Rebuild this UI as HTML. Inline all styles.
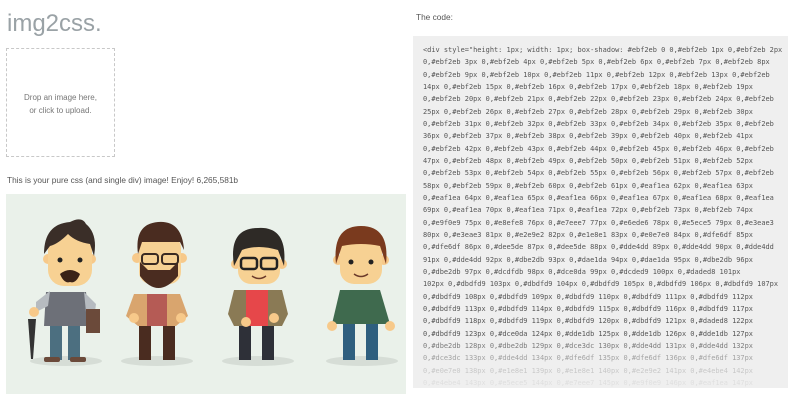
<!DOCTYPE html>
<html><head><meta charset="utf-8"><style>
html,body{margin:0;padding:0;background:#fff;width:800px;height:400px;overflow:hidden;font-family:"Liberation Sans",sans-serif;}
.t{position:absolute;left:7px;top:10px;font-size:24px;font-weight:300;color:#9aa2a6;letter-spacing:0px;}
.drop{position:absolute;left:6px;top:48px;width:107px;height:107px;border:1px dashed #c8c8c8;color:#777;font-size:8px;text-align:center;line-height:13px;}
.drop div{margin-top:42px}
.en{position:absolute;left:7px;top:175px;font-size:8.3px;color:#555;}
.img{position:absolute;left:6px;top:194px;width:400px;height:200px;background:#eaf1ea}
.code-l{position:absolute;left:416px;top:12px;font-size:8.3px;color:#555}
.box{position:absolute;left:413px;top:36px;width:375px;height:352px;background:#efefef;}
pre{margin:0;position:absolute;left:10px;top:8px;font-family:"DejaVu Sans Mono","Liberation Mono",monospace;font-size:6.95px;line-height:12.33px;color:#555;}
.f1{opacity:.75}.f2{opacity:.5}.f3{opacity:.25}
</style></head><body>
<div class="t">img2css.</div>
<div class="drop"><div>Drop an image here,<br>or click to upload.</div></div>
<div class="en">This is your pure css (and single div) image! Enjoy! 6,265,581b</div>
<div class="img">
<svg width="400" height="200" viewBox="0 0 400 200">
<g fill="#d6ddd6"><ellipse cx="60" cy="167" rx="36" ry="5"/><ellipse cx="151" cy="167" rx="36" ry="5"/><ellipse cx="252" cy="167" rx="36" ry="5"/><ellipse cx="356" cy="167" rx="36" ry="5"/></g>
<g>
<rect x="44" y="128" width="12" height="38" fill="#4c6f80"/><rect x="62" y="128" width="12" height="38" fill="#4c6f80"/>
<rect x="38" y="163" width="16" height="5" rx="2" fill="#6b4a3a"/><rect x="64" y="163" width="16" height="5" rx="2" fill="#6b4a3a"/>
<path d="M40 98 L80 98 L84 132 L38 132Z" fill="#6d7078"/>
<path d="M30 108 L44 97 L42 112 L30 118Z" fill="#b6bbc0"/><path d="M78 98 L90 110 L88 125 L80 118Z" fill="#b6bbc0"/>
<rect x="80" y="115" width="14" height="24" fill="#6b4a3a"/>
<circle cx="28" cy="118" r="5" fill="#f7c98a"/>
<path d="M22 125 L30 125 L27 165 L25 165Z" fill="#333"/>
<circle cx="42" cy="65" r="5" fill="#f7c98a"/><circle cx="85" cy="65" r="5" fill="#f7c98a"/>
<rect x="42" y="40" width="44" height="52" rx="16" fill="#f7d193"/>
<path d="M38 60 Q38 30 64 28 Q76 22 80 30 Q92 40 88 62 L84 50 Q70 48 62 40 Q52 50 44 52Z" fill="#3a2e28"/>
<circle cx="54" cy="66" r="2.5" fill="#222"/><circle cx="74" cy="66" r="2.5" fill="#222"/>
<path d="M54 80 Q64 72 74 80 Q70 90 64 88 Q58 90 54 80Z" fill="#3a2218"/>
</g>
<g>
<rect x="133" y="128" width="12" height="38" fill="#4a2c20"/><rect x="157" y="128" width="12" height="38" fill="#4a2c20"/>
<path d="M128 100 L174 100 L182 122 L170 132 L132 132 L120 122Z" fill="#d9a56e"/>
<rect x="141" y="100" width="20" height="32" fill="#b55b55"/>
<circle cx="128" cy="124" r="5" fill="#f7c98a"/><circle cx="175" cy="124" r="5" fill="#f7c98a"/>
<circle cx="131" cy="64" r="5" fill="#f7c98a"/><circle cx="176" cy="64" r="5" fill="#f7c98a"/>
<rect x="133" y="42" width="42" height="48" rx="12" fill="#f7d193"/>
<path d="M132 60 Q128 30 152 28 Q176 26 178 56 L174 48 L136 48Z" fill="#4a2c20"/>
<path d="M134 68 L134 82 Q152 106 172 82 L172 68 L164 76 L142 76Z" fill="#4a2c20"/>
<rect x="136" y="60" width="16" height="10" rx="3" fill="none" stroke="#3a2a22" stroke-width="2"/><rect x="156" y="60" width="16" height="10" rx="3" fill="none" stroke="#3a2a22" stroke-width="2"/>
</g>
<g>
<rect x="233" y="128" width="12" height="38" fill="#2e3038"/><rect x="256" y="128" width="12" height="38" fill="#2e3038"/>
<path d="M228 96 L276 96 L282 120 L276 132 L228 132 L222 120Z" fill="#8a7a55"/>
<rect x="240" y="96" width="22" height="36" fill="#e6474a"/>
<circle cx="240" cy="128" r="5" fill="#f7c98a"/><circle cx="268" cy="124" r="5" fill="#f7c98a"/>
<circle cx="230" cy="70" r="5" fill="#f7c98a"/><circle cx="276" cy="70" r="5" fill="#f7c98a"/>
<rect x="232" y="46" width="42" height="44" rx="13" fill="#f7d193"/>
<path d="M228 72 Q222 34 252 34 Q282 32 278 72 L272 56 Q252 50 236 56Z" fill="#2e2a26"/>
<rect x="235" y="64" width="16" height="11" rx="3" fill="none" stroke="#222" stroke-width="2.5"/><rect x="255" y="64" width="16" height="11" rx="3" fill="none" stroke="#222" stroke-width="2.5"/>
<path d="M246 82 Q253 87 260 82" stroke="#6b3a2a" fill="none" stroke-width="1.5"/>
</g>
<g>
<rect x="337" y="128" width="12" height="38" fill="#2f5f7f"/><rect x="360" y="128" width="12" height="38" fill="#2f5f7f"/>
<path d="M334 96 L374 96 L384 130 L326 130Z" fill="#3f6a4e"/>
<circle cx="326" cy="132" r="5" fill="#f7c98a"/><circle cx="384" cy="132" r="5" fill="#f7c98a"/>
<circle cx="332" cy="66" r="5" fill="#f7c98a"/><circle cx="378" cy="66" r="5" fill="#f7c98a"/>
<rect x="334" y="42" width="42" height="48" rx="14" fill="#f7d193"/>
<path d="M330 70 Q326 32 355 32 Q384 32 380 70 L374 52 Q355 48 336 52Z" fill="#7a3a1e"/>
<circle cx="345" cy="68" r="2.5" fill="#222"/><circle cx="365" cy="68" r="2.5" fill="#222"/>
<path d="M348 80 Q355 85 362 80" stroke="#6b3a2a" fill="none" stroke-width="1.5"/>
</g>
</svg>
</div>
<div class="code-l">The code:</div>
<div class="box"><pre>&lt;div style="height: 1px; width: 1px; box-shadow: #ebf2eb 0 0,#ebf2eb 1px 0,#ebf2eb 2px
0,#ebf2eb 3px 0,#ebf2eb 4px 0,#ebf2eb 5px 0,#ebf2eb 6px 0,#ebf2eb 7px 0,#ebf2eb 8px
0,#ebf2eb 9px 0,#ebf2eb 10px 0,#ebf2eb 11px 0,#ebf2eb 12px 0,#ebf2eb 13px 0,#ebf2eb
14px 0,#ebf2eb 15px 0,#ebf2eb 16px 0,#ebf2eb 17px 0,#ebf2eb 18px 0,#ebf2eb 19px
0,#ebf2eb 20px 0,#ebf2eb 21px 0,#ebf2eb 22px 0,#ebf2eb 23px 0,#ebf2eb 24px 0,#ebf2eb
25px 0,#ebf2eb 26px 0,#ebf2eb 27px 0,#ebf2eb 28px 0,#ebf2eb 29px 0,#ebf2eb 30px
0,#ebf2eb 31px 0,#ebf2eb 32px 0,#ebf2eb 33px 0,#ebf2eb 34px 0,#ebf2eb 35px 0,#ebf2eb
36px 0,#ebf2eb 37px 0,#ebf2eb 38px 0,#ebf2eb 39px 0,#ebf2eb 40px 0,#ebf2eb 41px
0,#ebf2eb 42px 0,#ebf2eb 43px 0,#ebf2eb 44px 0,#ebf2eb 45px 0,#ebf2eb 46px 0,#ebf2eb
47px 0,#ebf2eb 48px 0,#ebf2eb 49px 0,#ebf2eb 50px 0,#ebf2eb 51px 0,#ebf2eb 52px
0,#ebf2eb 53px 0,#ebf2eb 54px 0,#ebf2eb 55px 0,#ebf2eb 56px 0,#ebf2eb 57px 0,#ebf2eb
58px 0,#ebf2eb 59px 0,#ebf2eb 60px 0,#ebf2eb 61px 0,#eaf1ea 62px 0,#eaf1ea 63px
0,#eaf1ea 64px 0,#eaf1ea 65px 0,#eaf1ea 66px 0,#eaf1ea 67px 0,#eaf1ea 68px 0,#eaf1ea
69px 0,#eaf1ea 70px 0,#eaf1ea 71px 0,#eaf1ea 72px 0,#ebf2eb 73px 0,#ebf2eb 74px
0,#e9f0e9 75px 0,#e8efe8 76px 0,#e7eee7 77px 0,#e6ede6 78px 0,#e5ece5 79px 0,#e3eae3
80px 0,#e3eae3 81px 0,#e2e9e2 82px 0,#e1e8e1 83px 0,#e0e7e0 84px 0,#dfe6df 85px
0,#dfe6df 86px 0,#dee5de 87px 0,#dee5de 88px 0,#dde4dd 89px 0,#dde4dd 90px 0,#dde4dd
91px 0,#dde4dd 92px 0,#dbe2db 93px 0,#dae1da 94px 0,#dae1da 95px 0,#dbe2db 96px
0,#dbe2db 97px 0,#dcdfdb 98px 0,#dce0da 99px 0,#dcded9 100px 0,#daded8 101px
102px 0,#dbdfd9 103px 0,#dbdfd9 104px 0,#dbdfd9 105px 0,#dbdfd9 106px 0,#dbdfd9 107px
0,#dbdfd9 108px 0,#dbdfd9 109px 0,#dbdfd9 110px 0,#dbdfd9 111px 0,#dbdfd9 112px
0,#dbdfd9 113px 0,#dbdfd9 114px 0,#dbdfd9 115px 0,#dbdfd9 116px 0,#dbdfd9 117px
0,#dbdfd9 118px 0,#dbdfd9 119px 0,#dbdfd9 120px 0,#dbdfd9 121px 0,#daded8 122px
0,#dbdfd9 123px 0,#dce0da 124px 0,#dde1db 125px 0,#dde1db 126px 0,#dde1db 127px
<span class="f1">0,#dbe2db 128px 0,#dbe2db 129px 0,#dce3dc 130px 0,#dde4dd 131px 0,#dde4dd 132px</span>
<span class="f2">0,#dce3dc 133px 0,#dde4dd 134px 0,#dfe6df 135px 0,#dfe6df 136px 0,#dfe6df 137px</span>
<span class="f3">0,#e0e7e0 138px 0,#e1e8e1 139px 0,#e1e8e1 140px 0,#e2e9e2 141px 0,#e4ebe4 142px</span>
<span style="opacity:.1">0,#e4ebe4 143px 0,#e5ece5 144px 0,#e7eee7 145px 0,#e9f0e9 146px 0,#eaf1ea 147px</span></pre></div>
</body></html>
